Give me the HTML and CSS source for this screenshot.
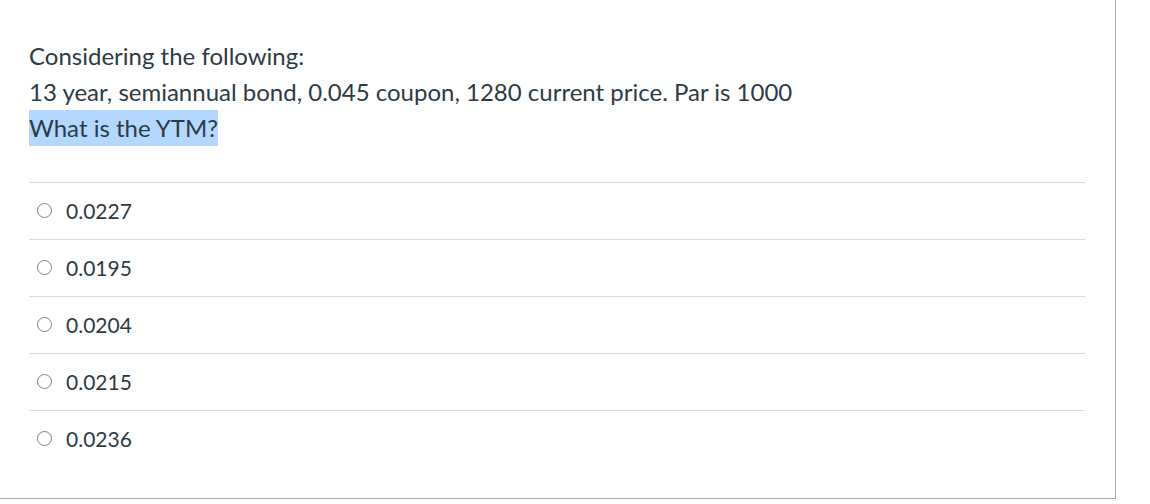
FILE: index.html
```html
<!DOCTYPE html>
<html>
<head>
<meta charset="utf-8">
<link rel="stylesheet" href="styles.css">
</head>
<body>
<div class="quiz">
  <div class="question">
    <p>Considering the following:</p>
    <p>13 year, semiannual bond, 0.045 coupon, 1280 current price. Par is 1000</p>
    <p><span class="hl">What is the YTM?</span></p>
  </div>
  <ul class="answers">
    <li class="answer"><span class="radio"></span><span class="label">0.0227</span></li>
    <li class="answer"><span class="radio"></span><span class="label">0.0195</span></li>
    <li class="answer"><span class="radio"></span><span class="label">0.0204</span></li>
    <li class="answer"><span class="radio"></span><span class="label">0.0215</span></li>
    <li class="answer"><span class="radio"></span><span class="label">0.0236</span></li>
  </ul>
</div>
</body>
</html>
```
FILE: styles.css
```css
html, body {
  margin: 0;
  padding: 0;
  background: #ffffff;
}
.quiz {
  width: 1116px;
  height: 499px;
  box-sizing: border-box;
  border-right: 1px solid #aaaaaa;
  border-bottom: 1px solid #aaaaaa;
  padding: 38px 30px 0 29px;
  font-family: Lato, "Liberation Sans", sans-serif;
  color: #2d3b45;
}
.question p {
  margin: 0;
  font-size: 24px;
  line-height: 36px;
}
.hl {
  background: #b3d7fe;
  display: inline-block;
}
.answers {
  list-style: none;
  margin: 36px 0 0 0;
  padding: 0;
}
.answer {
  display: flex;
  align-items: center;
  height: 57px;
  box-sizing: border-box;
  border-top: 1px solid #dcdcdc;
  padding: 0 0 2px 8px;
}
.radio {
  width: 13px;
  height: 13px;
  border: 1px solid #808080;
  border-radius: 50%;
  flex: none;
  margin-right: 14px;
}
.label {
  font-size: 21px;
}
```
